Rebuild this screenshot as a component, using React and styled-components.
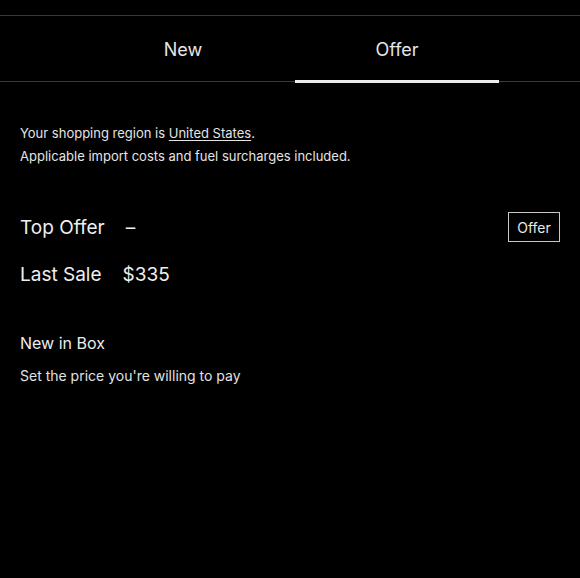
import React from "react";
import styled, { createGlobalStyle } from "styled-components";

const Global = createGlobalStyle`
  html, body {
    margin: 0;
    padding: 0;
    background: #000;
  }
  body {
    font-family: Inter, "Liberation Sans", Arial, sans-serif;
    color: #ececec;
  }
`;

const Page = styled.div`
  background: #000;
  min-height: 578px;
  padding-top: 15px;
  box-sizing: border-box;
`;

const TabBar = styled.nav`
  border-top: 1px solid #3a3a3a;
  border-bottom: 1px solid #3a3a3a;
`;

const TabList = styled.div`
  width: 418px;
  margin: 0 auto;
  display: grid;
  grid-template-columns: 1fr 1fr;
  column-gap: 10px;
`;

const Tab = styled.div`
  position: relative;
  height: 65px;
  padding-top: 1px;
  box-sizing: border-box;
  display: flex;
  align-items: center;
  justify-content: center;
  font-size: 18px;
  color: #e6e6e6;

  &::after {
    content: "";
    display: ${(p) => (p.$active ? "block" : "none")};
    position: absolute;
    left: 0;
    right: 0;
    bottom: -2px;
    height: 3px;
    background: #ededed;
  }
`;

const Content = styled.main`
  padding: 0 20px;
  display: flex;
  flex-direction: column;
`;

const Notice = styled.p`
  margin: 40px 0 0;
  font-size: 13px;
  line-height: 23px;
  color: #e4e4e4;
`;

const Underlined = styled.span`
  text-decoration: underline;
  text-underline-offset: 2px;
`;

const Stats = styled.div`
  margin-top: 44px;
  display: flex;
  flex-direction: column;
  gap: 17px;
`;

const StatRow = styled.div`
  height: 30px;
  display: flex;
  align-items: center;
  gap: 21px;
  font-size: 19px;
  color: #efefef;
`;

const StatValue = styled.span`
  flex: 1;
`;

const OfferButton = styled.button`
  width: 52px;
  height: 30px;
  box-sizing: border-box;
  background: transparent;
  border: 1px solid #c8c8c8;
  color: #eaeaea;
  font-family: inherit;
  font-size: 14px;
  padding: 0;
  cursor: pointer;
`;

const Condition = styled.h3`
  margin: 44px 0 0;
  font-size: 16px;
  font-weight: 400;
  line-height: 20px;
  color: #ececec;
`;

const Hint = styled.p`
  margin: 14px 0 0;
  font-size: 14px;
  line-height: 18px;
  color: #e2e2e2;
`;

export default function App() {
  return (
    <>
      <Global />
      <Page>
        <TabBar>
          <TabList>
            <Tab>New</Tab>
            <Tab $active>Offer</Tab>
          </TabList>
        </TabBar>
        <Content>
          <Notice>
            Your shopping region is <Underlined>United States</Underlined>.
            <br />
            Applicable import costs and fuel surcharges included.
          </Notice>
          <Stats>
            <StatRow>
              <span>Top Offer</span>
              <StatValue>–</StatValue>
              <OfferButton>Offer</OfferButton>
            </StatRow>
            <StatRow>
              <span>Last Sale</span>
              <StatValue>$335</StatValue>
            </StatRow>
          </Stats>
          <Condition>New in Box</Condition>
          <Hint>Set the price you're willing to pay</Hint>
        </Content>
      </Page>
    </>
  );
}
